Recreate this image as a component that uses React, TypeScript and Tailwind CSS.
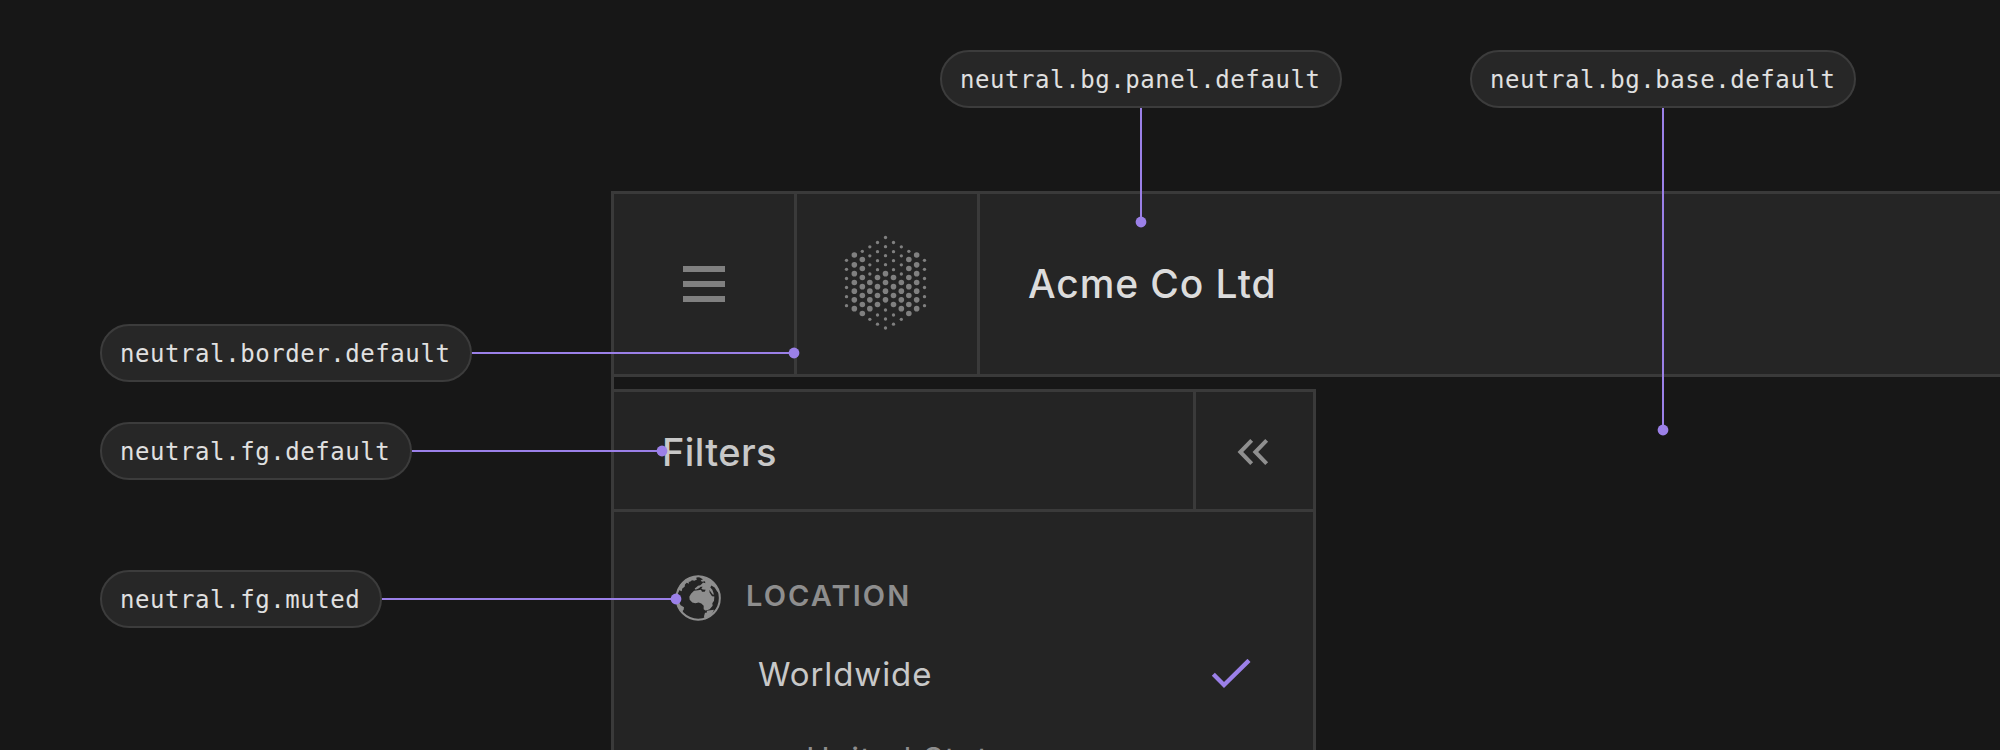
const SANS = "font-['Inter',sans-serif] [font-feature-settings:'cv11'] whitespace-nowrap";

type Column = { x: number[]; small: number[]; big: number[] };

const columns: Column[] = [
  { x: [739.5, 973.5], small: [241, 268, 295.5, 322.5, 350, 377], big: [] },
  { x: [763, 950], small: [], big: [225, 254.5, 281, 307.5, 333.5, 359.5, 386] },
  { x: [787, 926.5], small: [214], big: [238.5, 265.5, 292.5, 320, 346.5, 373.5, 400.5] },
  { x: [809.5, 904], small: [200.5, 227.5, 254.5, 282, 418], big: [307.5, 333.5, 359.5, 386] },
  { x: [832.5, 880.5], small: [187.5, 215, 242, 269, 405, 432.5], big: [292.5, 320, 346.5, 373.5] },
  { x: [856.5], small: [172.5, 200, 227, 254, 390, 417, 444], big: [281, 307.5, 333.5, 359.5] },
];

function Logo() {
  return (
    <svg viewBox="591 42 540 540" className="size-[180px] fill-[#808080]">
      {columns.flatMap((c) =>
        c.x.flatMap((x) => [
          ...c.small.map((y) => <circle key={`s${x}-${y}`} cx={x} cy={y} r={5} />),
          ...c.big.map((y) => <circle key={`b${x}-${y}`} cx={x} cy={y} r={8.4} />),
        ]),
      )}
    </svg>
  );
}

function Globe() {
  return (
    <svg viewBox="222 43.5 144 144" className="size-12 fill-[#8e8e8e]">
      <circle cx="294.5" cy="115.5" r="65" fill="none" stroke="#8e8e8e" strokeWidth="6" />
      <path d="M229 108 232 92 243 73 262 57 284 50 298 49 288 55 291 60 283 64 276 62 270 67 266 67 267 73 260 70 255 75 254 82 247 87 245 95 238 92 234 99Z" />
      <path d="M296 49 318 54 340 69 350 82 356 96 352 97 344 84 334 78 331 84 337 91 341 102 340 107 333 98 328 91 329 100 336 110 343 111 342 124 337 131 338 139 329 149 321 152 316 153 311 149 311 139 304 132 296 129 286 131 277 129 269 121 268 112 273 103 282 94 294 92 303 91 306 97 314 97 317 91 308 90 304 87 308 82 302 82 297 86 287 91 284 87 289 83 294 79 301 77 306 73 309 69 316 71 315 65 306 67 302 63 309 59 303 56Z" />
      <path d="M231 128 238 130 242 137 252 143 251 151 247 155 249 163 238 149Z" />
      <path d="M314 180 312 170 315 160 320 160 321 154 331 152 342 151 338 160 332 167 325 172 320 178Z" />
    </svg>
  );
}

function Badge({ children, place }: { children: string; place: string }) {
  return (
    <div
      className={`absolute flex h-[58px] items-center rounded-full border-2 border-[#3c3c3c] bg-[#272727] pt-0.5 pl-[18px] font-['DejaVu_Sans_Mono',monospace] text-[24px] leading-none tracking-[0.57px] whitespace-nowrap text-[#e0e0e0] ${place}`}
    >
      {children}
    </div>
  );
}

function Line({ place }: { place: string }) {
  return <div className={`absolute bg-[#9b80e8] ${place}`} />;
}

function Dot({ place }: { place: string }) {
  return (
    <svg viewBox="0 0 12 12" className={`absolute size-3 fill-[#9b80e8] ${place}`}>
      <circle cx="6" cy="6" r="5.4" />
    </svg>
  );
}

export default function App() {
  return (
    <div className="relative h-[750px] w-[2000px] overflow-hidden bg-[#171717] pt-[191px] pl-[611px]">
      <div className="h-[559px] border-l-[3px] border-[#3a3a3a]">
        <header className="flex h-[186px] border-y-[3px] border-[#3a3a3a] bg-[#252525]">
          <div className="flex w-[183px] flex-col items-center justify-center gap-[9px] border-r-[3px] border-[#3a3a3a]">
            <div className="h-1.5 w-[42px] bg-[#808080]" />
            <div className="h-1.5 w-[42px] bg-[#808080]" />
            <div className="h-1.5 w-[42px] bg-[#808080]" />
          </div>
          <div className="w-[183px] border-r-[3px] border-[#3a3a3a]">
            <Logo />
          </div>
          <div className={`flex items-center pl-[48px] text-[39px] font-medium tracking-[0.9px] text-[#dcdcdc] ${SANS}`}>
            Acme Co Ltd
          </div>
        </header>

        <aside className="mt-3 h-[361px] w-[702px] overflow-hidden border-t-[3px] border-r-[3px] border-[#3a3a3a] bg-[#242424]">
          <div className="flex h-[120px] border-b-[3px] border-[#3a3a3a]">
            <div className={`flex w-[582px] items-center border-r-[3px] border-[#3a3a3a] pt-[3px] pl-12 text-[38px] font-medium tracking-[0.4px] text-[#c8c8c8] ${SANS}`}>
              Filters
            </div>
            <svg viewBox="0 0 351 351" className="size-[117px] fill-none stroke-[#8f8f8f]" strokeWidth={12}>
              <path d="M167 145 133 180l34 35M212 145l-34 35 34 35" />
            </svg>
          </div>
          <div className="mt-[62px] flex h-12 items-center pl-[60px]">
            <Globe />
            <span className={`ml-[24px] pb-1 text-[29px] font-semibold tracking-[2.1px] text-[#8e8e8e] ${SANS}`}>LOCATION</span>
          </div>
          <div className={`mt-[27px] flex h-[52px] items-center justify-between pr-[62px] pl-[144px] text-[33px] tracking-[0.9px] text-[#c8c8c8] ${SANS}`}>
            Worldwide
            <svg viewBox="0 0 120 96" className="h-8 w-10 fill-none stroke-[#9b80e8]" strokeWidth={13}>
              <path d="M7 46 39 78 114 4" />
            </svg>
          </div>
          <div className={`mt-[33px] flex h-[52px] items-center pl-[192px] text-[32px] tracking-[1.3px] text-[#8e8e8e] ${SANS}`}>
            United States
          </div>
        </aside>
      </div>

      <Line place="top-[352px] left-[471px] h-0.5 w-[323px]" />
      <Line place="top-[450px] left-[411px] h-0.5 w-[251px]" />
      <Line place="top-[598px] left-[381px] h-0.5 w-[295px]" />
      <Line place="top-[107px] left-[1140px] h-[115px] w-0.5" />
      <Line place="top-[107px] left-[1662px] h-[323px] w-0.5" />
      <Dot place="top-[347px] left-[788px]" />
      <Dot place="top-[445px] left-[656px]" />
      <Dot place="top-[593px] left-[670px]" />
      <Dot place="top-[216px] left-[1135px]" />
      <Dot place="top-[424px] left-[1657px]" />

      <Badge place="top-[50px] left-[940px] w-[402px]">neutral.bg.panel.default</Badge>
      <Badge place="top-[50px] left-[1470px] w-[386px]">neutral.bg.base.default</Badge>
      <Badge place="top-[324px] left-[100px] w-[372px]">neutral.border.default</Badge>
      <Badge place="top-[422px] left-[100px] w-[312px]">neutral.fg.default</Badge>
      <Badge place="top-[570px] left-[100px] w-[282px]">neutral.fg.muted</Badge>
    </div>
  );
}
